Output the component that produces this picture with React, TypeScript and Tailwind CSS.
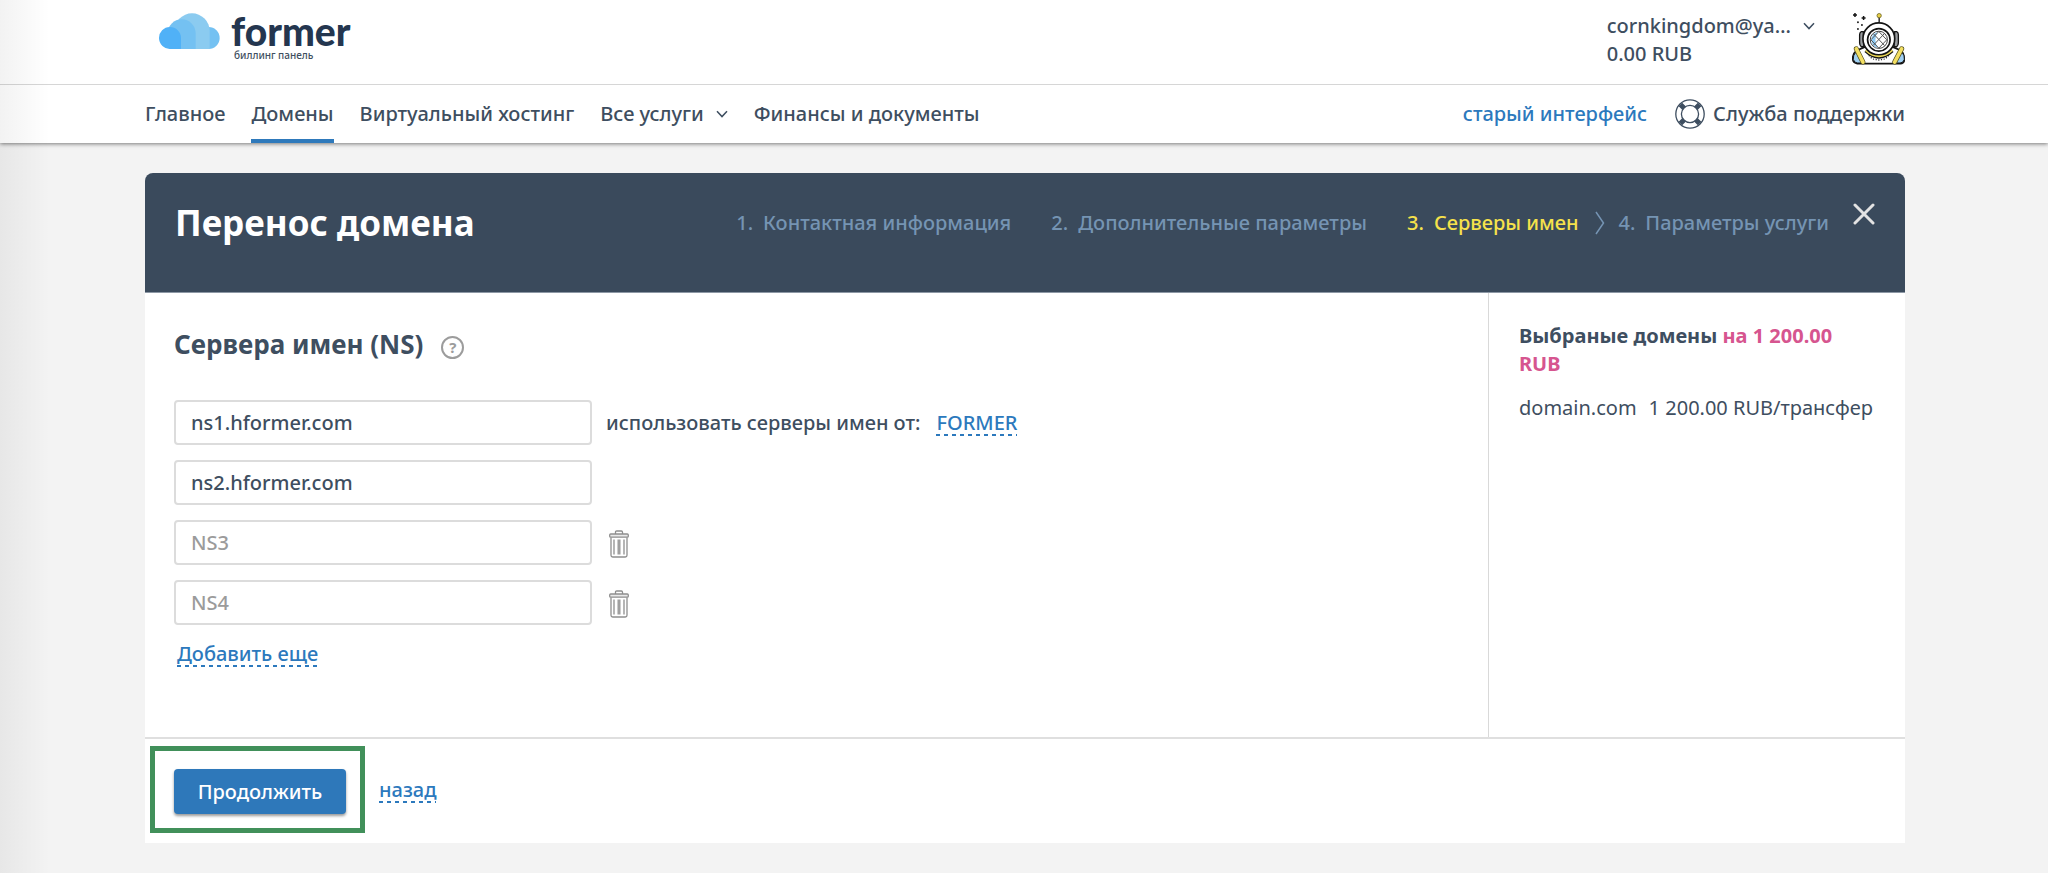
import { useState } from "react";

function Chevron() {
  return (
    <svg viewBox="0 0 12 8" width="12" height="8" fill="none" stroke="currentColor" strokeWidth="1.5" aria-hidden="true">
      <path d="M1 1.2 6 6.6 11 1.2" />
    </svg>
  );
}

function CloudLogo() {
  return (
    <svg viewBox="26 24 183 108" width="61" height="36" aria-hidden="true">
      <circle cx="175" cy="99" r="33" fill="#74c1f2" />
      <path d="M72 132V78a53 53 0 0 1 106 0V132z" fill="#8bcbf0" />
      <path d="M60 132 52 85a42 42 0 0 1 84 0V132z" fill="#74c1f2" />
      <path d="M92 132H60a33 33 0 1 1 32-33z" fill="#50b1f7" />
    </svg>
  );
}

function DiverAvatar() {
  const dots = [
    [88, 166], [94, 172], [101, 176], [109, 178], [117, 179], [125, 178], [133, 176], [140, 172], [146, 166],
  ];
  return (
    <svg viewBox="36 34 160 160" width="53" height="53" aria-hidden="true">
      <g stroke="#141414" strokeWidth="4.500">
        <path d="M45 37v12M39 43h12M71 46v12M65 52h12" />
      </g>
      <g fill="#222">
        <circle cx="54" cy="65" r="3" />
        <circle cx="66" cy="73" r="3" />
        <circle cx="54" cy="85" r="3" />
      </g>
      <path d="M118 50v16" stroke="#141414" strokeWidth="4" />
      <circle cx="118" cy="45" r="6.500" fill="#e8cf45" stroke="#6d6424" strokeWidth="2.500" />
      <path d="M70 93h-6q-5 2-5 10v24q0 8 5 12h8zM165 93h6q5 2 5 10v24q0 8-5 12h-8z" fill="#9a9da0" stroke="#141414" strokeWidth="4" />
      <path d="M50 150Q38 160 38 174T52 190H182Q196 188 194 173T184 150L160 140H74z" fill="#fff" stroke="#141414" strokeWidth="5" />
      <path d="M46 157Q39 165 40 177 43 188 53 188H68L52 158zM188 157q7 8 6 20-3 11-13 11H166l16-30z" fill="#9fd0f3" stroke="#141414" strokeWidth="3" />
      <path d="M78 150Q117 186 157 150" fill="none" stroke="#141414" strokeWidth="13" />
      <path d="M78 149Q117 184 157 149" fill="none" stroke="#ecd856" strokeWidth="8" />
      <path d="m49 145 20 40M186 145l-21 40" stroke="#55501f" strokeWidth="15" strokeLinecap="round" />
      <path d="m49 145 20 40M186 145l-21 40" stroke="#f3df63" strokeWidth="11" strokeLinecap="round" />
      <circle cx="117" cy="115" r="48" fill="#fff" stroke="#141414" strokeWidth="5" />
      <circle cx="117" cy="118" r="34" fill="#fff" stroke="#141414" strokeWidth="5" />
      <circle cx="117" cy="118" r="26" fill="#fff" stroke="#444" strokeWidth="3" />
      <path d="M113 94a25 25 0 0 0 0 48Q100 118 113 94z" fill="#8ecbf5" />
      <path d="M101 100l33 35M133 100l-33 35M117 93l24 25-24 25-24-25z" fill="none" stroke="#555" strokeWidth="3" />
      {dots.map(([x, y]) => (
        <circle key={x} cx={x} cy={y} r="2" fill="#141414" />
      ))}
    </svg>
  );
}

function Lifebuoy() {
  return (
    <svg viewBox="0 0 30 30" width="30" height="30" fill="none" stroke="currentColor" aria-hidden="true">
      <circle cx="15" cy="15" r="14.200" strokeWidth="1.300" />
      <circle cx="15" cy="15" r="8.600" strokeWidth="1.300" />
      <g strokeWidth="5">
        <path d="m9.200 9.200-3.800-3.800M20.800 9.200l3.800-3.800M9.200 20.800l-3.800 3.800M20.800 20.800l3.800 3.800" />
      </g>
    </svg>
  );
}

function Trash() {
  return (
    <svg viewBox="0 0 20 28" width="20" height="28" fill="none" stroke="#8f8f8f" strokeWidth="1.300" aria-hidden="true">
      <path d="M6.500 4V2.200q0-1.200 1.200-1.200h4.600q1.200 0 1.200 1.200V4" />
      <rect x=".7" y="4" width="18.600" height="3.200" rx="1" fill="#e9e9e9" />
      <path d="M2 7.500V25.300q0 1.700 1.700 1.700h12.600q1.700 0 1.700-1.700V7.500M5 9.500v15M9.200 9.500v15M10.800 9.500v15M15 9.500v15" />
    </svg>
  );
}

const linkDashed =
  "text-[#2c79bd] leading-[26px] bg-[repeating-linear-gradient(90deg,#2c79bd_0_4px,transparent_4px_8px)] bg-[length:100%_2px] bg-bottom bg-no-repeat";

const steps = ["Контактная информация", "Дополнительные параметры", "Серверы имен", "Параметры услуги"];
const currentStep = 2;

export default function App() {
  const [servers, setServers] = useState(["ns1.hformer.com", "ns2.hformer.com", "", ""]);
  const change = (i: number, value: string) => setServers(servers.map((s, j) => (j === i ? value : s)));

  return (
    <div className="relative min-h-screen bg-[#f3f3f3] pb-[30px] font-['Noto_Sans',sans-serif] text-[20px] leading-7 font-medium text-[#3e4e60]">
      <header className="bg-white shadow-[0_1px_4px_rgba(0,0,0,0.5)]">
        <div className="flex h-[85px] items-start justify-between border-b border-[#d6d6d6] pr-[143px] pl-[159px]">
          <a href="#home" className="flex items-start gap-[11px] pt-[13px]">
            <CloudLogo />
            <span className="flex flex-col">
              <span className="font-['Lato',sans-serif] text-[39px] leading-9 font-black text-[#24364f]">former</span>
              <span className="pl-[3px] text-[10px] leading-3">биллинг панель</span>
            </span>
          </a>
          <div className="flex items-start pt-3">
            <div>
              <button type="button" className="flex items-center gap-3 text-left">
                <span>cornkingdom@ya…</span>
                <Chevron />
              </button>
              <div>0.00 RUB</div>
            </div>
            <button type="button" aria-label="Профиль" className="ml-[37px]">
              <DiverAvatar />
            </button>
          </div>
        </div>
        <nav className="flex h-[58px] items-stretch justify-between pr-[143px] pl-[145px]">
          <div className="flex items-stretch gap-[26px]">
            <a href="#main" className="flex items-center">Главное</a>
            <a href="#domains" className="flex items-center border-b-4 border-[#2e79bb] pt-1">Домены</a>
            <a href="#hosting" className="flex items-center">Виртуальный хостинг</a>
            <button type="button" className="flex items-center gap-3">
              Все услуги
              <Chevron />
            </button>
            <a href="#finance" className="flex items-center">Финансы и документы</a>
          </div>
          <div className="flex items-center gap-[28px]">
            <a href="#old" className="text-[#2c79bd]">старый интерфейс</a>
            <a href="#support" className="flex items-center gap-2">
              <Lifebuoy />
              Служба поддержки
            </a>
          </div>
        </nav>
      </header>

      <main className="pt-[30px] pr-[143px] pl-[145px]">
        <div className="flex h-[120px] items-start justify-between rounded-t-lg border-b border-[#8d98a5] bg-[#3a4a5c] px-[30px] pt-[30px]">
          <h1 className="text-[35px] leading-10 font-bold text-white">Перенос домена</h1>
          <div className="flex items-start">
            <ol className="flex pt-[6px] text-[#7594b3]">
              {steps.map((step, i) => (
                <li key={step} className={i === currentStep ? "flex items-center text-[#f6e24b]" : "flex items-center"}>
                  {i > 0 && (
                    <span className="flex w-[40px] justify-center pl-1 text-[#7594b3]">
                      {i === currentStep + 1 && (
                        <svg viewBox="0 0 10 24" width="10" height="24" fill="none" stroke="currentColor" strokeWidth="1.500" aria-hidden="true">
                          <path d="M1 1l7.500 11L1 23" />
                        </svg>
                      )}
                    </span>
                  )}
                  <span className="mr-[10px]">{i + 1}.</span>
                  {step}
                </li>
              ))}
            </ol>
            <button type="button" aria-label="Закрыть" className="ml-[24px]">
              <svg viewBox="0 0 22 22" width="22" height="22" stroke="#e3e3e3" strokeWidth="3" strokeLinecap="round" aria-hidden="true">
                <path d="M2 2l18 18M20 2 2 20" />
              </svg>
            </button>
          </div>
        </div>

        <form className="bg-white" onSubmit={(e) => e.preventDefault()}>
          <div className="flex border-b-2 border-[#dfdfdf]">
            <section className="grow px-[29px] pt-[31px] pb-[69px]">
              <h2 className="mb-9 flex items-center gap-[18px] text-[26px] leading-10 font-bold">
                Сервера имен (NS)
                <button type="button" aria-label="Справка" className="mt-[6px] flex size-[23px] items-center justify-center rounded-full border-2 border-[#9c9c9c] text-[15px] leading-4 text-[#9c9c9c]">
                  ?
                </button>
              </h2>
              <div className="flex flex-col gap-[15px]">
                {servers.map((server, i) => (
                  <div key={i} className="flex items-center">
                    <input
                      type="text"
                      aria-label={`NS${i + 1}`}
                      placeholder={`NS${i + 1}`}
                      value={server}
                      onChange={(e) => change(i, e.target.value)}
                      className="h-[45px] w-[418px] rounded-[4px] border-2 border-[#dcdcdc] bg-white px-[15px] placeholder:text-[#9b9b9b]"
                    />
                    {i === 0 && (
                      <>
                        <span className="ml-[14px]">использовать серверы имен от:</span>
                        <button type="button" className={`ml-[16px] ${linkDashed}`}>FORMER</button>
                      </>
                    )}
                    {i > 1 && (
                      <button type="button" aria-label="Удалить" className="ml-[17px] pt-[2px]" onClick={() => setServers(servers.filter((_, j) => j !== i))}>
                        <Trash />
                      </button>
                    )}
                  </div>
                ))}
              </div>
              <button type="button" className={`mt-4 ml-[3px] ${linkDashed}`} onClick={() => setServers([...servers, ""])}>
                Добавить еще
              </button>
            </section>
            <aside className="w-[417px] shrink-0 border-l border-[#d9d9d9] px-[30px] pt-[29px]">
              <p className="font-bold">
                Выбраные домены <span className="text-[#d6558f]">на 1 200.00 RUB</span>
              </p>
              <p className="mt-4 flex gap-3 font-normal whitespace-nowrap">
                <span>domain.com</span>
                <span>1 200.00 RUB/трансфер</span>
              </p>
            </aside>
          </div>
          <div className="flex items-center gap-[14px] pt-[7px] pr-[30px] pb-[10px] pl-[5px]">
            <div className="border-[5px] border-[#41905a] pt-[18px] pr-[14px] pb-[14px] pl-[19px]">
              <button type="submit" className="block h-[45px] w-[172px] rounded-[4px] bg-[#2e78ba] text-white shadow-[0_2px_3px_rgba(0,0,0,0.4)]">
                Продолжить
              </button>
            </div>
            <button type="button" className={linkDashed}>назад</button>
          </div>
        </form>
      </main>

      <div className="pointer-events-none absolute inset-y-0 left-0 w-[50px] bg-gradient-to-r from-black/5 to-transparent" />
    </div>
  );
}
